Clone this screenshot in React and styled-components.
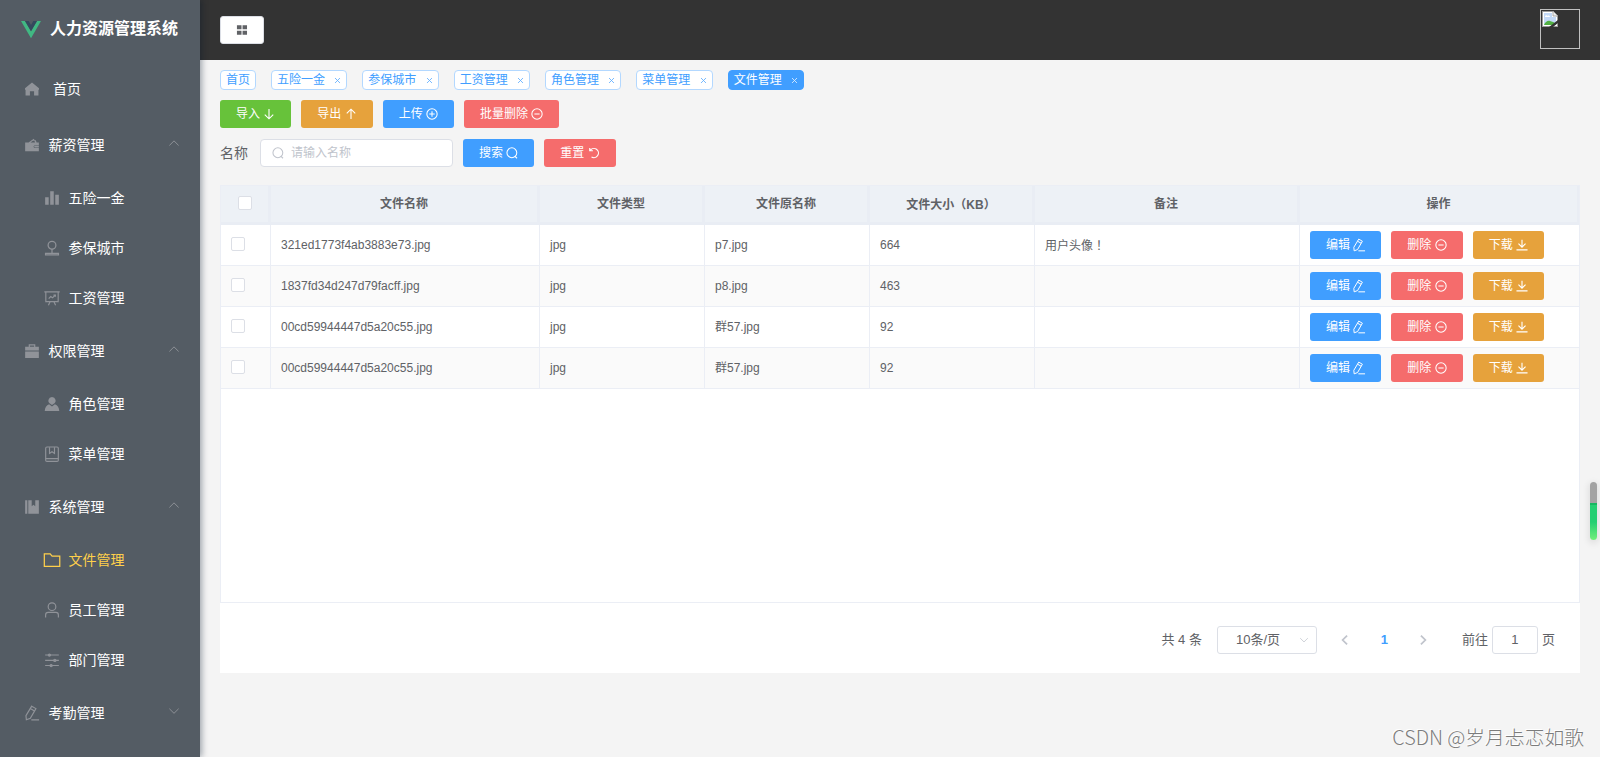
import React from "react";
import styled, { createGlobalStyle, css } from "styled-components";

const GlobalStyle = createGlobalStyle`
* {
  box-sizing: border-box;
}
body {
  margin: 0;
  overflow: hidden;
  color: #606266;
  font-family: "Liberation Sans", "Noto Sans CJK SC", sans-serif;
  line-height: 20px;
}
button, input {
  font-family: inherit;
}
`;

/* all icons are drawn on a 1024 grid and take the text colour */
const icons = {
  home: <path fill="currentColor" d="M512 40L0 450v110h40v420h320V680h304v300h320V560h40V450z" />,
  wallet: (
    <path
      fill="currentColor"
      fillRule="evenodd"
      d="M10 320h250L640 60l70 100h80l60 160h164v220H680a130 130 0 0 0 0 200h334v230H10zM400 320h330l-40-110h-110zM720 590h294v110H720a55 55 0 0 1 0-110z"
    />
  ),
  chart: <path fill="currentColor" d="M10 450h260v550H10zM380 20h260v980H380zM750 270h264v730H750z" />,
  place: (
    <g fill="none" stroke="currentColor" strokeWidth="90">
      <circle cx="512" cy="310" r="285" />
      <path d="M512 590v280M40 1010V900h944v110z" />
    </g>
  ),
  board: (
    <g fill="none" stroke="currentColor" strokeWidth="85">
      <path d="M-50 60h1124M60 60v720h904V60M370 780l-120 270M654 780l120 270M270 560l150-150 130 90 190-190M620 300h140v120" />
    </g>
  ),
  toolbox: (
    <path
      fill="currentColor"
      fillRule="evenodd"
      d="M270 200V20h484v180h260v270H10V200zM360 200h304V110H360zM10 550h1004v470H10z"
    />
  ),
  userSolid: (
    <path
      fill="currentColor"
      d="M512 0a265 265 0 0 1 130 495L512 580 382 495A265 265 0 0 1 512 0zM300 530l212 160 212-160c200 60 310 240 320 500H-20c10-260 120-440 320-500z"
    />
  ),
  notebook: (
    <g fill="none" stroke="currentColor" strokeWidth="85">
      <rect x="50" y="0" width="924" height="1050" rx="90" />
      <path d="M50 850h924M330 10v460l182-120 182 120V10" />
    </g>
  ),
  management: <path fill="currentColor" d="M10 20h160v990H10zM240 20h250v440l130-110 130 110V20h264v990H240z" />,
  folder: (
    <path fill="none" stroke="currentColor" strokeWidth="90" d="M-50 60h430l140 170h560v750H-50z" />
  ),
  user: (
    <g fill="none" stroke="currentColor" strokeWidth="85">
      <circle cx="512" cy="270" r="280" />
      <path d="M45 1060V870c0-110 80-190 180-190h574c100 0 180 80 180 190v190" />
    </g>
  ),
  operation: (
    <g fill="currentColor" stroke="currentColor" strokeWidth="75">
      <path d="M10 150h1004M10 540h1004M10 920h1004" />
      <circle cx="320" cy="150" r="85" />
      <circle cx="720" cy="540" r="85" />
      <circle cx="450" cy="920" r="85" />
    </g>
  ),
  edit: (
    <g fill="none" stroke="currentColor" strokeWidth="85">
      <path d="M490 10l310 180-410 710-290 110-30-300zM390 190l300 170M460 1010h570" />
    </g>
  ),
  up: <path fill="none" stroke="currentColor" strokeWidth="80" d="M120 720l392-390 392 390" />,
  down: <path fill="none" stroke="currentColor" strokeWidth="80" d="M120 320l392 390 392-390" />,
  left: <path fill="none" stroke="currentColor" strokeWidth="150" d="M690 130L310 512l380 382" />,
  right: <path fill="none" stroke="currentColor" strokeWidth="150" d="M334 130l380 382-380 382" />,
  close: <path fill="none" stroke="currentColor" strokeWidth="100" d="M230 230l564 564M794 230L230 794" />,
  grid: <path fill="currentColor" d="M80 100h390v350H80zM560 100h380v350H560zM80 570h390v350H80zM560 570h380v350H560z" />,
  arrowDown: <path fill="none" stroke="currentColor" strokeWidth="95" d="M512 90v820M150 570l362 350 362-350" />,
  arrowUp: <path fill="none" stroke="currentColor" strokeWidth="95" d="M512 934V110M150 454l362-350 362 350" />,
  plus: (
    <g fill="none" stroke="currentColor" strokeWidth="90">
      <circle cx="512" cy="512" r="440" />
      <path d="M512 280v464M280 512h464" />
    </g>
  ),
  minus: (
    <g fill="none" stroke="currentColor" strokeWidth="90">
      <circle cx="512" cy="512" r="440" />
      <path d="M290 512h444" />
    </g>
  ),
  search: (
    <g fill="none" stroke="currentColor" strokeWidth="90">
      <circle cx="500" cy="490" r="420" />
      <path d="M760 790l180 170" />
    </g>
  ),
  refresh: (
    <g fill="none" stroke="currentColor" strokeWidth="100">
      <path d="M190 280A390 390 0 1 1 300 850M150 90v230h270" />
    </g>
  ),
  download: <path fill="none" stroke="currentColor" strokeWidth="95" d="M512 70v620M210 400l302 300 302-300M40 930h944" />,
};

const Svg = styled.svg`
display: block;
flex: none;
overflow: visible;
width: ${(p) => p.$size}px;
height: ${(p) => p.$size}px;
`;

const Icon = ({ name, size = 12 }) => (
  <Svg $size={size} viewBox="0 0 1024 1024">
    {icons[name]}
  </Svg>
);

const Layout = styled.div`
display: flex;
height: 757px;
background: #f4f4f4;
`;
const Sidebar = styled.aside`
width: 200px;
flex: none;
background: #545c64;
box-shadow: 2px 0 6px rgba(0, 21, 41, 0.35);
z-index: 1;
`;
const Brand = styled.div`
display: flex;
align-items: center;
height: 61px;
padding: 0 0 3px 21px;
gap: 9px;
color: #fff;
font-size: 16px;
font-weight: bold;
white-space: nowrap;
`;
const VueLogo = styled.svg`
width: 20px;
height: 18px;
margin-top: 2px;
`;
const MenuItem = styled.div`
display: flex;
align-items: center;
height: ${(p) => (p.$sub ? 50 : 56)}px;
padding: 0 20px 0 ${(p) => (p.$sub ? 40 : 20)}px;
color: ${(p) => (p.$active ? "#ffd04b" : "#fff")};
font-size: 14px;
`;
const MenuIcon = styled.span`
display: flex;
justify-content: center;
width: 24px;
margin-right: ${(p) => (p.$wide ? 9 : 4.5)}px;
color: ${(p) => (p.$active ? "#ffd04b" : "#909399")};
`;
const MenuArrow = styled.span`
margin: -4px 0 0 auto;
color: #909399;
`;
const Content = styled.div`
flex: 1;
min-width: 0;
`;
const Header = styled.header`
display: flex;
align-items: center;
justify-content: space-between;
height: 60px;
padding: 0 20px;
background: #333;
`;
const CollapseButton = styled.button`
display: flex;
align-items: center;
justify-content: center;
width: 44px;
height: 28px;
padding: 0;
border: 1px solid #dcdfe6;
border-radius: 3px;
background: #fff;
color: #606266;
`;
const Avatar = styled.div`
width: 40px;
height: 40px;
margin-bottom: 2px;
padding: 1px;
border: 1px solid #c0c0c0;
`;
const Main = styled.main`
padding: 10px 20px;
`;
const Tags = styled.div`
display: flex;
gap: 15px;
`;
const Tag = styled.span`
display: flex;
align-items: center;
justify-content: space-between;
width: ${(p) => (p.$fixed ? "36px" : "76.33px")};
height: 20px;
padding: 0 5px;
border: 1px solid ${(p) => (p.$active ? "#409eff" : "#b3d8ff")};
border-radius: 4px;
background: ${(p) => (p.$active ? "#409eff" : "#fff")};
color: ${(p) => (p.$active ? "#fff" : "#409eff")};
font-size: 12px;
line-height: 18px;
white-space: nowrap;
svg {
  margin-right: -1px;
  opacity: 0.8;
}
`;
const Toolbar = styled.div`
display: flex;
align-items: center;
gap: 10px;
margin-top: ${(p) => p.$top}px;
`;
const colors = {
  success: "#67c23a",
  warning: "#e6a23c",
  primary: "#409eff",
  danger: "#f56c6c",
};
const Button = styled.button`
display: flex;
align-items: center;
flex: none;
gap: 3.33px;
height: 28px;
padding: 0 16px;
border: none;
border-radius: 3px;
background: ${(p) => colors[p.$type]};
color: #fff;
font-size: 12px;
line-height: 1;
white-space: nowrap;
`;
const Label = styled.label`
width: 30px;
padding-bottom: 1px;
font-size: 14px;
white-space: nowrap;
`;
const SearchBox = styled.div`
display: flex;
align-items: center;
gap: 7px;
width: 193px;
height: 28px;
padding-left: 11px;
border: 1px solid #dcdfe6;
border-radius: 4px;
background: #fff;
color: #c0c4cc;
`;
const SearchInput = styled.input`
flex: 1;
min-width: 0;
border: none;
padding: 0;
outline: none;
font-size: 12px;
&::placeholder {
  color: #c0c4cc;
}
`;
const Table = styled.div`
height: 418px;
margin-top: 18px;
border: 1px solid #ebeef5;
background: #fff;
font-size: 12px;
`;
const Row = styled.div`
display: grid;
grid-template-columns: 50px 269px 165px 165px 165px 265px 279px;
height: 41px;
border-bottom: 1px solid #ebeef5;
background: ${(p) => (p.$striped ? "#fafafa" : "#fff")};
`;
const HeadRow = styled(Row)`
height: 39px;
border-bottom: 3px solid #e9edf4;
background: #edf1f6;
font-weight: bold;
`;
const Cell = styled.div`
display: flex;
align-items: center;
gap: 10px;
padding: 0 10px;
border-right: 1px solid #ebeef5;
white-space: nowrap;
&:last-child {
  border-right: none;
}
${(p) =>
  p.$head &&
  css`
    justify-content: center;
    border-right: 3px solid #e9edf4;
    &:last-child {
      border-right: 2px solid #e9edf4;
    }
  `}
`;
/* full-width punctuation sits in the middle of its box */
const Punct = styled.span`
font-family: "Noto Sans CJK TC", sans-serif;
`;
const Checkbox = styled.span`
width: 14px;
height: 14px;
margin-bottom: 2px;
border: 1px solid #dcdfe6;
border-radius: 2px;
background: #fff;
`;
const Pagination = styled.div`
display: flex;
align-items: center;
justify-content: flex-end;
height: 70px;
padding: 3px 25px 0 0;
background: #fff;
font-size: 13px;
white-space: nowrap;
`;
const PageSelect = styled.div`
display: flex;
align-items: center;
justify-content: space-between;
width: 100px;
height: 28px;
margin: 0 9px 0 15px;
padding: 0 7px 0 18px;
border: 1px solid #dcdfe6;
border-radius: 3px;
svg {
  color: #c0c4cc;
}
`;
const Pager = styled.span`
display: flex;
justify-content: center;
width: 39px;
color: ${(p) => (p.$active ? "#409eff" : "#c0c4cc")};
font-weight: bold;
`;
const Jump = styled.div`
display: flex;
align-items: center;
gap: 4px;
margin-left: 19px;
`;
const PageInput = styled.input`
width: 46px;
height: 28px;
padding: 0;
border: 1px solid #dcdfe6;
border-radius: 3px;
color: #606266;
font-size: 13px;
text-align: center;
`;
const SideMeter = styled.div`
position: absolute;
top: 482px;
right: 3px;
width: 7px;
height: 58px;
border-radius: 4px;
background: linear-gradient(#a3a3a3 0 21px, #16b861 21px 23px, #25cf72 23px 40px, #72ee7c 100%);
box-shadow: 0 2px 6px 2px rgba(0, 0, 0, 0.08);
`;
const Watermark = styled.div`
position: absolute;
right: 16px;
bottom: 6px;
color: #7c7c7c;
font-family: "Noto Sans CJK SC", sans-serif;
font-size: 19.8px;
font-weight: 300;
line-height: 28px;
text-shadow: -1px -1px 0 #fff;
white-space: nowrap;
`;

const menu = [
  { text: "首页", icon: "home", single: true },
  { text: "薪资管理", icon: "wallet", arrow: "up" },
  { text: "五险一金", icon: "chart", sub: true },
  { text: "参保城市", icon: "place", sub: true },
  { text: "工资管理", icon: "board", sub: true },
  { text: "权限管理", icon: "toolbox", arrow: "up" },
  { text: "角色管理", icon: "userSolid", sub: true },
  { text: "菜单管理", icon: "notebook", sub: true },
  { text: "系统管理", icon: "management", arrow: "up" },
  { text: "文件管理", icon: "folder", sub: true, active: true },
  { text: "员工管理", icon: "user", sub: true },
  { text: "部门管理", icon: "operation", sub: true },
  { text: "考勤管理", icon: "edit", arrow: "down" },
];

const tags = ["首页", "五险一金", "参保城市", "工资管理", "角色管理", "菜单管理", "文件管理"];

const columns = ["文件名称", "文件类型", "文件原名称", "文件大小（KB）", "备注", "操作"];

const files = [
  { name: "321ed1773f4ab3883e73.jpg", type: "jpg", oldName: "p7.jpg", size: 664, remark: "用户头像！" },
  { name: "1837fd34d247d79facff.jpg", type: "jpg", oldName: "p8.jpg", size: 463, remark: "" },
  { name: "00cd59944447d5a20c55.jpg", type: "jpg", oldName: "群57.jpg", size: 92, remark: "" },
  { name: "00cd59944447d5a20c55.jpg", type: "jpg", oldName: "群57.jpg", size: 92, remark: "" },
];

const Text = ({ value }) => (
  <span>
    {value.split(/([（）！])/).map((part, i) => (i % 2 ? <Punct key={i}>{part}</Punct> : part))}
  </span>
);

const ActionButton = ({ type, icon, children }) => (
  <Button $type={type}>
    {children}
    <Icon name={icon} />
  </Button>
);

const BrokenSvg = styled.svg`
display: block;
width: 16px;
height: 16px;
`;
const BrokenImage = () => (
  <BrokenSvg viewBox="0 0 16 16">
    <path d="M0 0h11l5 5v11H0z" fill="#9a9a9a" />
    <path d="M1 1h9.500l4.500 4.500V15H1z" fill="#fff" />
    <path d="M2 2h8v4h4v8H2z" fill="#c3d9f7" />
    <path d="M3 6c0-2 2-2 2.500-1 1-1 2.500 0 2.500 1z" fill="#fff" />
    <path d="M2 14c1-3 4-5 6-4s4 0 6 4z" fill="#52b043" />
    <path d="M11 0v5h5z" fill="#eee" stroke="#9a9a9a" strokeWidth=".8" />
    <path d="M7 16l9-7v3l-5 4z" fill="#333" />
  </BrokenSvg>
);

const App = () => {
  return (
    <>
      <GlobalStyle />
      <Layout>
        <Sidebar>
          <Brand>
            <VueLogo viewBox="0 0 20 18">
              <path d="M0 0h4l6 10.300L16 0h4L10 17.300z" fill="#41b883" />
              <path d="M4 0h3.700L10 4l2.300-4H16l-6 10.300z" fill="#35495e" />
            </VueLogo>
            人力资源管理系统
          </Brand>
          {menu.map((item) => (
            <MenuItem key={item.text} $sub={item.sub} $active={item.active}>
              <MenuIcon $wide={item.single} $active={item.active}>
                <Icon name={item.icon} size={14} />
              </MenuIcon>
              {item.text}
              {item.arrow && (
                <MenuArrow>
                  <Icon name={item.arrow} size={12} />
                </MenuArrow>
              )}
            </MenuItem>
          ))}
        </Sidebar>
        <Content>
          <Header>
            <CollapseButton>
              <Icon name="grid" />
            </CollapseButton>
            <Avatar>
              <BrokenImage />
            </Avatar>
          </Header>
          <Main>
            <Tags>
              {tags.map((tag, i) => (
                <Tag key={tag} $fixed={i === 0} $active={i === tags.length - 1}>
                  {tag}
                  {i > 0 && <Icon name="close" size={9} />}
                </Tag>
              ))}
            </Tags>
            <Toolbar $top={10}>
              <ActionButton type="success" icon="arrowDown">导入</ActionButton>
              <ActionButton type="warning" icon="arrowUp">导出</ActionButton>
              <ActionButton type="primary" icon="plus">上传</ActionButton>
              <ActionButton type="danger" icon="minus">批量删除</ActionButton>
            </Toolbar>
            <Toolbar $top={11}>
              <Label>名称</Label>
              <SearchBox>
                <Icon name="search" />
                <SearchInput placeholder="请输入名称" />
              </SearchBox>
              <ActionButton type="primary" icon="search">搜索</ActionButton>
              <ActionButton type="danger" icon="refresh">重置</ActionButton>
            </Toolbar>
            <Table>
              <HeadRow>
                <Cell $head>
                  <Checkbox />
                </Cell>
                {columns.map((col) => (
                  <Cell $head key={col}>
                    <Text value={col} />
                  </Cell>
                ))}
              </HeadRow>
              {files.map((file, i) => (
                <Row key={i} $striped={i % 2 === 1}>
                  <Cell>
                    <Checkbox />
                  </Cell>
                  <Cell>{file.name}</Cell>
                  <Cell>{file.type}</Cell>
                  <Cell>{file.oldName}</Cell>
                  <Cell>{file.size}</Cell>
                  <Cell>
                    <Text value={file.remark} />
                  </Cell>
                  <Cell>
                    <ActionButton type="primary" icon="edit">编辑</ActionButton>
                    <ActionButton type="danger" icon="minus">删除</ActionButton>
                    <ActionButton type="warning" icon="download">下载</ActionButton>
                  </Cell>
                </Row>
              ))}
            </Table>
            <Pagination>
              <span>共 4 条</span>
              <PageSelect>
                10条/页
                <Icon name="down" size={10} />
              </PageSelect>
              <Pager>
                <Icon name="left" size={12} />
              </Pager>
              <Pager $active>1</Pager>
              <Pager>
                <Icon name="right" size={12} />
              </Pager>
              <Jump>
                前往
                <PageInput defaultValue="1" />
                页
              </Jump>
            </Pagination>
          </Main>
        </Content>
      </Layout>
      <SideMeter />
      <Watermark>CSDN @岁月忐忑如歌</Watermark>
    </>
  );
};

export default App;
